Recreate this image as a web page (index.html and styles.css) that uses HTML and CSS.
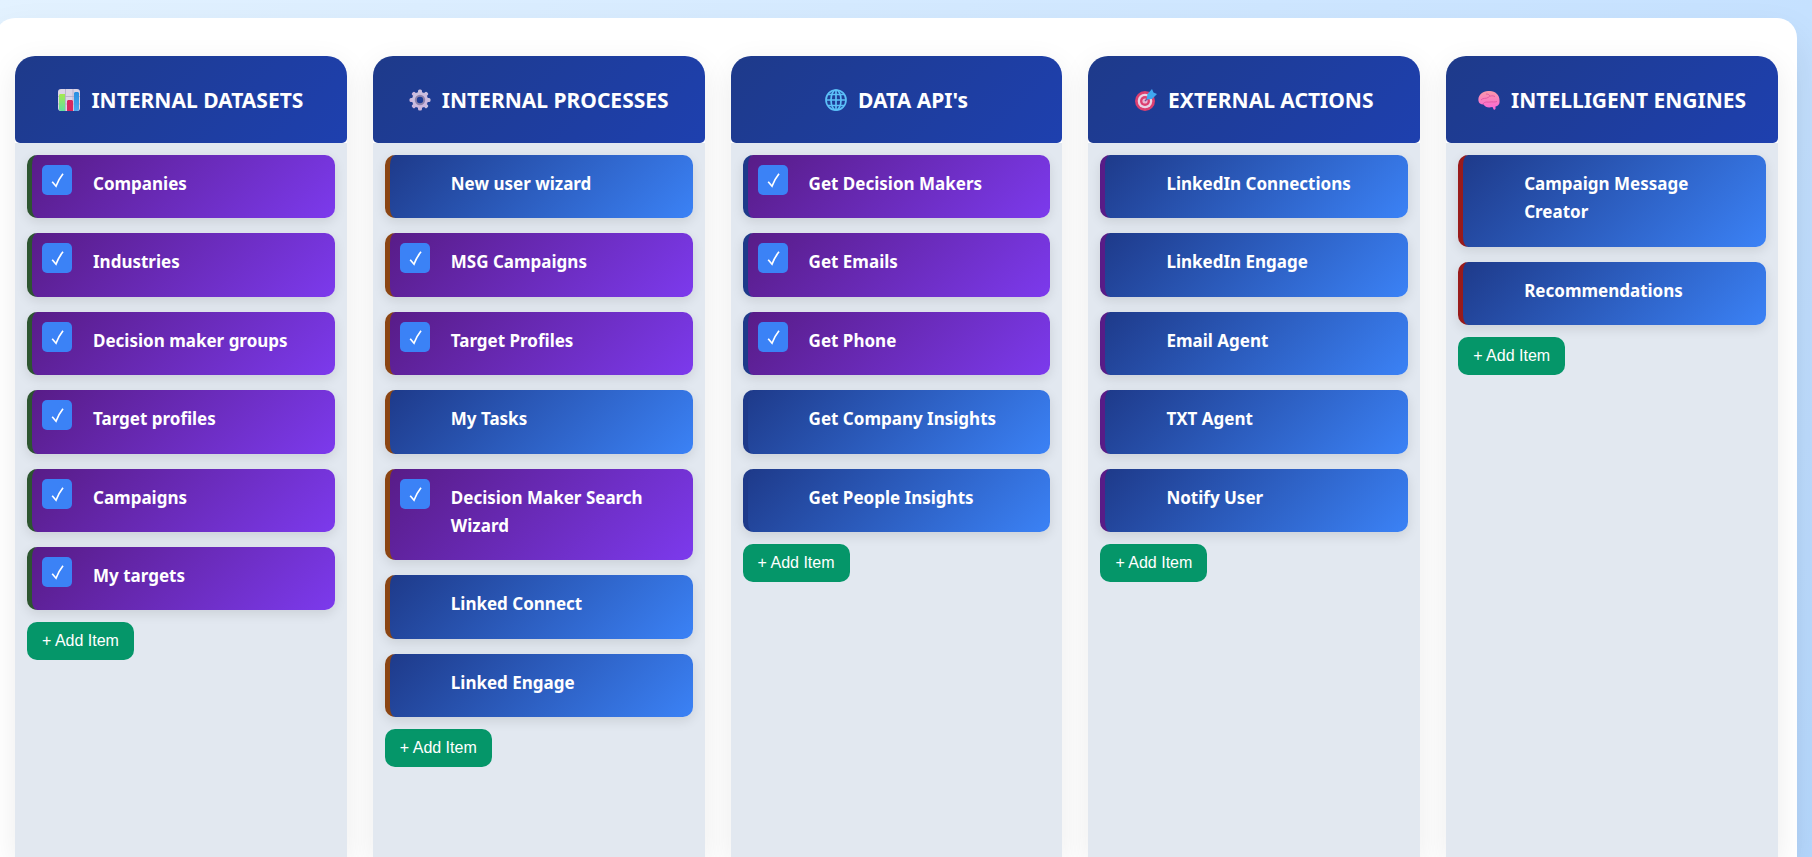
FILE: index.html
```html
<!DOCTYPE html>
<html lang="en">
<head>
<meta charset="utf-8">
<title>Workflow board</title>
<link rel="stylesheet" href="styles.css">
</head>
<body>
<svg class="defs" aria-hidden="true">
  <defs>
    <linearGradient id="lime" x1="0" y1="0" x2="0" y2="1"><stop offset="0" stop-color="#a5e94f"/><stop offset="1" stop-color="#5fe0a0"/></linearGradient>
    <linearGradient id="sky" x1="0" y1="0" x2="0" y2="1"><stop offset="0" stop-color="#2a8fe0"/><stop offset="1" stop-color="#4aa8f0"/></linearGradient>
    <linearGradient id="steel" x1="0" y1="0" x2="1" y2="1"><stop offset="0" stop-color="#c9c3e0"/><stop offset="1" stop-color="#cdb2dc"/></linearGradient>
    <linearGradient id="pink" x1="0" y1="0" x2="0" y2="1"><stop offset="0" stop-color="#fb9aa9"/><stop offset="1" stop-color="#fb63d8"/></linearGradient>
    <symbol id="check" viewBox="0 0 30 30"><path d="M10.200 16.800 L14 21.200 Q16.500 14.500 21 8.800" fill="none" stroke="#fff" stroke-width="1.700"/></symbol>
  </defs>
</svg>
<main class="board">

  <section class="column datasets">
    <h2 class="head">
      <svg class="icon" viewBox="0 0 22 22"><rect width="22" height="22" rx="3" fill="#dcd5e6"/><path d="M0 7.500H22M0 15H22M7.500 0V22M15 0V22" stroke="#b5aac8" stroke-width=".8"/><path d="M2 5h5v17H3a2 2 0 0 1-2-2V6z" fill="url(#lime)"/><path d="M9 12l1-1h4l1 1v10H9z" fill="#d8285f"/><path d="M16 4l1-1h3l1 1v16a2 2 0 0 1-2 2h-3z" fill="url(#sky)"/></svg>
      INTERNAL DATASETS
    </h2>
    <div class="body">
      <ul class="list">
        <li class="item"><span class="tick"><input type="checkbox" id="a1" checked><svg><use href="#check"/></svg></span><label for="a1">Companies</label></li>
        <li class="item"><span class="tick"><input type="checkbox" id="a2" checked><svg><use href="#check"/></svg></span><label for="a2">Industries</label></li>
        <li class="item"><span class="tick"><input type="checkbox" id="a3" checked><svg><use href="#check"/></svg></span><label for="a3">Decision maker groups</label></li>
        <li class="item"><span class="tick"><input type="checkbox" id="a4" checked><svg><use href="#check"/></svg></span><label for="a4">Target profiles</label></li>
        <li class="item"><span class="tick"><input type="checkbox" id="a5" checked><svg><use href="#check"/></svg></span><label for="a5">Campaigns</label></li>
        <li class="item"><span class="tick"><input type="checkbox" id="a6" checked><svg><use href="#check"/></svg></span><label for="a6">My targets</label></li>
      </ul>
      <button class="add" type="button">+ Add Item</button>
    </div>
  </section>

  <section class="column processes">
    <h2 class="head">
      <svg class="icon" viewBox="0 0 22 22"><g fill="url(#steel)"><path id="tooth" d="M9 2q0-1.500 1.500-1.500h1q1.500 0 1.500 1.500v18q0 1.500-1.500 1.500h-1q-1.500 0-1.500-1.500z"/><use href="#tooth" transform="rotate(45 11 11)"/><use href="#tooth" transform="rotate(90 11 11)"/><use href="#tooth" transform="rotate(135 11 11)"/><circle cx="11" cy="11" r="8"/></g><circle cx="11" cy="11" r="4.200" fill="#1e3c98" stroke="#8d83ad" stroke-width="2"/></svg>
      INTERNAL PROCESSES
    </h2>
    <div class="body">
      <ul class="list">
        <li class="item"><span class="tick"><input type="checkbox" id="b1"><svg><use href="#check"/></svg></span><label for="b1">New user wizard</label></li>
        <li class="item"><span class="tick"><input type="checkbox" id="b2" checked><svg><use href="#check"/></svg></span><label for="b2">MSG Campaigns</label></li>
        <li class="item"><span class="tick"><input type="checkbox" id="b3" checked><svg><use href="#check"/></svg></span><label for="b3">Target Profiles</label></li>
        <li class="item"><span class="tick"><input type="checkbox" id="b4"><svg><use href="#check"/></svg></span><label for="b4">My Tasks</label></li>
        <li class="item"><span class="tick"><input type="checkbox" id="b5" checked><svg><use href="#check"/></svg></span><label for="b5">Decision Maker Search Wizard</label></li>
        <li class="item"><span class="tick"><input type="checkbox" id="b6"><svg><use href="#check"/></svg></span><label for="b6">Linked Connect</label></li>
        <li class="item"><span class="tick"><input type="checkbox" id="b7"><svg><use href="#check"/></svg></span><label for="b7">Linked Engage</label></li>
      </ul>
      <button class="add" type="button">+ Add Item</button>
    </div>
  </section>

  <section class="column apis">
    <h2 class="head">
      <svg class="icon" viewBox="0 0 22 22"><g fill="none" stroke="#5cc0f8" stroke-width="1.700"><circle cx="11" cy="11" r="10"/><ellipse cx="11" cy="11" rx="5" ry="10"/><path d="M11 1V21M1 11H21M3 5.500H19M3 16.500H19"/></g></svg>
      DATA API's
    </h2>
    <div class="body">
      <ul class="list">
        <li class="item"><span class="tick"><input type="checkbox" id="c1" checked><svg><use href="#check"/></svg></span><label for="c1">Get Decision Makers</label></li>
        <li class="item"><span class="tick"><input type="checkbox" id="c2" checked><svg><use href="#check"/></svg></span><label for="c2">Get Emails</label></li>
        <li class="item"><span class="tick"><input type="checkbox" id="c3" checked><svg><use href="#check"/></svg></span><label for="c3">Get Phone</label></li>
        <li class="item"><span class="tick"><input type="checkbox" id="c4"><svg><use href="#check"/></svg></span><label for="c4">Get Company Insights</label></li>
        <li class="item"><span class="tick"><input type="checkbox" id="c5"><svg><use href="#check"/></svg></span><label for="c5">Get People Insights</label></li>
      </ul>
      <button class="add" type="button">+ Add Item</button>
    </div>
  </section>

  <section class="column actions">
    <h2 class="head">
      <svg class="icon" viewBox="0 0 22 22"><circle cx="10" cy="12" r="10" fill="#dc3f70"/><circle cx="10" cy="12" r="7.300" fill="#e9d3e6"/><circle cx="10" cy="12" r="5" fill="#dc3f70"/><circle cx="10" cy="12" r="2.600" fill="#e9b5d0"/><path d="M10 12L16 6" stroke="#7a4a9a" stroke-width="1.400"/><path d="M11.500 10.500L12.500 5l4.500-5 1.500 3.500L22 5l-5 5z" fill="#3fa9f0"/></svg>
      EXTERNAL ACTIONS
    </h2>
    <div class="body">
      <ul class="list">
        <li class="item"><span class="tick"><input type="checkbox" id="d1"><svg><use href="#check"/></svg></span><label for="d1">LinkedIn Connections</label></li>
        <li class="item"><span class="tick"><input type="checkbox" id="d2"><svg><use href="#check"/></svg></span><label for="d2">LinkedIn Engage</label></li>
        <li class="item"><span class="tick"><input type="checkbox" id="d3"><svg><use href="#check"/></svg></span><label for="d3">Email Agent</label></li>
        <li class="item"><span class="tick"><input type="checkbox" id="d4"><svg><use href="#check"/></svg></span><label for="d4">TXT Agent</label></li>
        <li class="item"><span class="tick"><input type="checkbox" id="d5"><svg><use href="#check"/></svg></span><label for="d5">Notify User</label></li>
      </ul>
      <button class="add" type="button">+ Add Item</button>
    </div>
  </section>

  <section class="column engines">
    <h2 class="head">
      <svg class="icon" viewBox="0 0 22 22"><path d="M.5 12C-.5 6 5 1.500 11 2c6-.5 11 4 10.500 10 .5 3-1.500 5-4 5.500L17.500 20l-1.500 1-1.500-3c-4 1-7 .5-9-2.500C2.500 15.500.8 14 .5 12z" fill="url(#pink)"/><path d="M3 11c2-2.500 5-1 7-2.500s4-2.500 7-1M5 15c2-3 4-1.500 7-2s4 .5 7-.5M8 5c2 0 3 .5 4 2" fill="none" stroke="#e0509f" stroke-width=".8"/></svg>
      INTELLIGENT ENGINES
    </h2>
    <div class="body">
      <ul class="list">
        <li class="item"><span class="tick"><input type="checkbox" id="e1"><svg><use href="#check"/></svg></span><label for="e1">Campaign Message Creator</label></li>
        <li class="item"><span class="tick"><input type="checkbox" id="e2"><svg><use href="#check"/></svg></span><label for="e2">Recommendations</label></li>
      </ul>
      <button class="add" type="button">+ Add Item</button>
    </div>
  </section>

</main>
</body>
</html>
```
FILE: styles.css
```css
* { box-sizing: border-box; }

body {
  margin: 0;
  min-height: 100vh;
  display: flex;
  flex-direction: column;
  overflow: hidden;
  padding: 18px 15px 0 0;
  background: linear-gradient(135deg, #e3f2ff 0%, #b7d9ff 100%);
  font-family: "Segoe UI", "Noto Sans", "Open Sans", sans-serif;
}

.defs { position: absolute; width: 0; height: 0; }

.board {
  flex: 1;
  display: grid;
  grid-template-columns: repeat(5, minmax(0, 1fr));
  gap: 26px;
  margin-left: -5px;
  padding: 38px 19px 0 20px;
  background: #fff;
  border-radius: 20px 20px 0 0;
  box-shadow: 0 20px 40px rgba(0, 0, 0, 0.1);
}

.column {
  display: flex;
  flex-direction: column;
  border-radius: 20px 20px 0 0;
  box-shadow: 0 8px 30px rgba(0, 0, 0, 0.08);
}

.head {
  display: flex;
  align-items: center;
  justify-content: center;
  gap: 11px;
  height: 87px;
  margin: 0;
  border-radius: 20px 20px 5px 5px;
  background: linear-gradient(135deg, #1e3a8a, #1e40af);
  color: #fff;
  font-size: 21px;
  font-weight: 700;
  white-space: nowrap;
}

.icon { width: 22px; height: 22px; flex: none; }

.body {
  flex: 1;
  padding: 12px;
  background: #e2e8f0;
}

.list {
  display: grid;
  gap: 15px;
  margin: 0 0 12px;
  padding: 0;
  list-style: none;
}

.item {
  display: flex;
  align-items: flex-start;
  gap: 21px;
  padding: 10px 15px 20px 10px;
  border-left: 5px solid;
  border-radius: 10px;
  background: linear-gradient(135deg, #1e3a8a, #3b82f6);
  box-shadow: 0 4px 12px rgba(0, 0, 0, 0.1);
}

.item:has(:checked) { background: linear-gradient(135deg, #581c87, #7c3aed); }

.item label {
  padding-top: 5px;
  color: #fff;
  font-size: 17px;
  font-weight: 700;
  line-height: 1.67;
}

.tick { display: grid; flex: none; width: 30px; height: 30px; }
.tick input, .tick svg { grid-area: 1 / 1; width: 30px; height: 30px; margin: 0; opacity: 0; }
.tick input { appearance: none; border-radius: 5px; background: #3b82f6; }
.tick svg { pointer-events: none; }
.tick input:checked, .tick input:checked + svg { opacity: 1; }

.datasets .item { border-color: #2d5530; }
.processes .item { border-color: #8b4513; }
.apis .item { border-color: #1e3a8a; }
.actions .item { border-color: #581c87; }
.engines .item { border-color: #991b1b; }

.add {
  display: block;
  padding: 10px 15px;
  border: 0;
  border-radius: 10px;
  background: #059669;
  color: #fff;
  font-family: Arial, "Liberation Sans", sans-serif;
  font-size: 16px;
  line-height: 18px;
}
```
